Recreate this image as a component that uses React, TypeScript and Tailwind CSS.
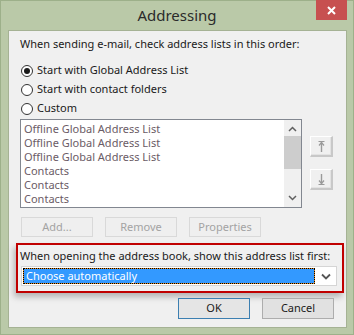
const Radio = ({ label, checked }: { label: string; checked?: boolean }) => (
  <div className="flex items-center h-[19px]">
    <span className="ml-px flex items-center justify-center w-[12px] h-[12px] rounded-full border border-[#333] bg-white">
      {checked && <span className="w-[6px] h-[6px] rounded-full bg-[#1a1a1a]" />}
    </span>
    <span className="ml-[4px]">{label}</span>
  </div>
);

const MoveButton = ({ down }: { down?: boolean }) => (
  <div className="w-[23px] h-[21px] flex items-center justify-center bg-[#f0f0f0] border-t border-l border-t-white border-l-white border-r-2 border-b-2 border-r-[#c8c8c8] border-b-[#c8c8c8] shadow-[inset_-1px_-1px_0_#e3e3e3]">
    <svg width="7" height="11" viewBox="0 0 7 11" className={down ? "rotate-180" : ""}>
      <path d="M0.5 0.5h6" stroke="#9a9a9a" strokeWidth="1" />
      <path d="M3.5 1v10" stroke="#9a9a9a" strokeWidth="1.4" />
      <path d="M1 4.5l2.5-3 2.5 3" fill="none" stroke="#9a9a9a" strokeWidth="1.2" />
    </svg>
  </div>
);

const DisabledButton = ({ label }: { label: string }) => (
  <div className="w-[72px] h-[20px] flex items-center justify-center bg-[#efefef] border border-[#d9d9d9] text-[#a3a3a3]">
    {label}
  </div>
);

const rows = [
  "Offline Global Address List",
  "Offline Global Address List",
  "Offline Global Address List",
  "Contacts",
  "Contacts",
  "Contacts",
];

export default function App() {
  return (
    <div className="w-[354px] h-[335px] bg-[#bac9a8] border border-[#9db08a] flex flex-col text-[11px] text-[#1a1a1a] font-['Noto_Sans',sans-serif]">
      {/* title bar */}
      <div className="relative h-[29px] flex items-center justify-center">
        <span className="text-[15px] text-[#2b2b2b] -mt-px">Addressing</span>
        <div className="absolute top-[-1px] right-[6px] w-[31px] h-[20px] bg-[#c75050] flex items-center justify-center">
          <svg width="9" height="9" viewBox="0 0 9 9">
            <path d="M1 1l7 7M8 1l-7 7" stroke="white" strokeWidth="2" />
          </svg>
        </div>
      </div>

      {/* panel */}
      <div className="ml-[7px] mr-[6px] h-[298px] border border-[#a5b294] bg-[#f0f0f0] pl-[11px] pr-[12px] flex flex-col">
        <div className="mt-[5px] h-[16px] leading-[16px]">
          When sending e-mail, check address lists in this order:
        </div>
        <div className="mt-[9px] flex flex-col">
          <Radio label="Start with Global Address List" checked />
          <Radio label="Start with contact folders" />
          <Radio label="Custom" />
        </div>

        <div className="mt-px flex items-start">
          <div className="w-[282px] h-[89px] border border-[#828790] bg-white flex">
            <div className="flex-1 pt-[2px] pl-[3px] flex flex-col text-[#6b5c66]">
              {rows.map((r, i) => (
                <div key={i} className="h-[14px] leading-[14px]">
                  {r}
                </div>
              ))}
            </div>
            <div className="w-[17px] bg-[#f0f0f0] flex flex-col items-center">
              <svg width="9" height="6" viewBox="0 0 9 6" className="mt-[6px]">
                <path d="M1 5l3.5-3.5L8 5" fill="none" stroke="#606060" strokeWidth="1.5" />
              </svg>
              <div className="mt-[4px] w-[17px] h-[33px] bg-[#cdcdcd]" />
              <div className="flex-1" />
              <svg width="9" height="6" viewBox="0 0 9 6" className="mb-[6px]">
                <path d="M1 1l3.5 3.5L8 1" fill="none" stroke="#606060" strokeWidth="1.5" />
              </svg>
            </div>
          </div>
          <div className="ml-[8px] mt-[17px] flex flex-col gap-[12px]">
            <MoveButton />
            <MoveButton down />
          </div>
        </div>

        <div className="mt-[9px] flex gap-[12px] ml-px">
          <DisabledButton label="Add..." />
          <DisabledButton label="Remove" />
          <DisabledButton label="Properties" />
        </div>

        <div className="mt-[6px] -ml-[4px] -mr-[10px] h-[50px] border-2 border-[#c00000] shadow-[-2px_4px_6px_rgba(0,0,0,0.25)] pl-[2px] pr-[5px] flex flex-col">
          <div className="mt-[3px] h-[16px] leading-[16px]">
            When opening the address book, show this address list first:
          </div>
          <div className="mt-[2px] ml-[1px] h-[20px] border border-[#d5d5d5] bg-white flex items-center">
            <div className="ml-[1px] w-[292px] h-[16px] border border-dotted border-black bg-[#e58a20]">
              <div className="h-full bg-[#3399ff] text-white leading-[13px] pl-[2px]">
                Choose automatically
              </div>
            </div>
            <div className="flex-1 flex justify-center">
              <svg width="10" height="7" viewBox="0 0 10 7">
                <path d="M1 1.5l4 4 4-4" fill="none" stroke="#555" strokeWidth="1.8" />
              </svg>
            </div>
          </div>
        </div>

        <div className="mt-[5px] flex justify-end gap-[12px]">
          <div className="w-[72px] h-[21px] flex items-center justify-center bg-[#e5e5e5] border border-[#3c7fb1]">
            OK
          </div>
          <div className="w-[72px] h-[21px] flex items-center justify-center bg-[#e1e1e1] border border-[#adadad]">
            Cancel
          </div>
        </div>
      </div>
    </div>
  );
}
